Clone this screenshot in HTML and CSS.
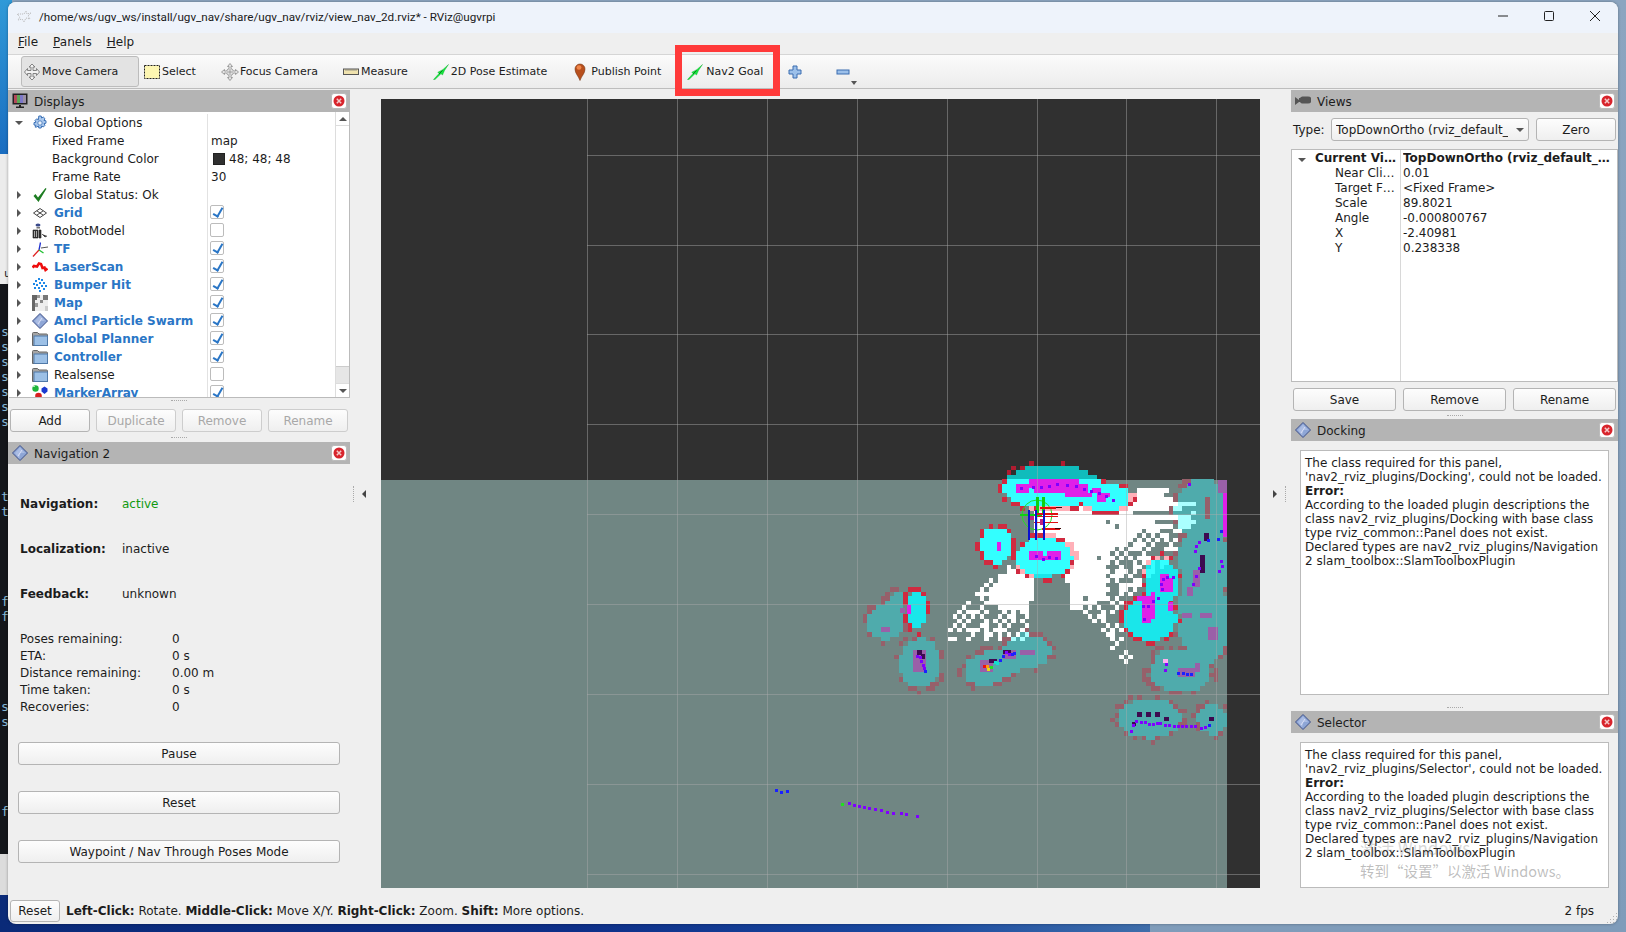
FILE: index.html
```html
<!DOCTYPE html>
<html lang="en">
<head>
<meta charset="utf-8">
<title>RViz</title>
<link rel="stylesheet" href="styles.css">
</head>
<body>
<svg class="defs" width="0" height="0" aria-hidden="true">
  <symbol id="i-app" viewBox="0 0 16 16"><path d="M1 4l3 3-2 3 4-1 2 3 2-4 4 1-2-3 3-3-4 1-1-3-2 3z" fill="none" stroke="#b5b5b5" stroke-dasharray="1 1"/></symbol>
  <symbol id="i-move" viewBox="0 0 18 18"><path d="M9 1l3 3h-2v3.500h3.500v-2l3 3.500-3 3.500v-2H10V14h2l-3 3-3-3h2v-3.500H4.500v2L1.500 9l3-3.500v2H8V4H6z" fill="#f2f2f2" stroke="#777" stroke-width=".9"/></symbol>
  <symbol id="i-select" viewBox="0 0 16 16"><rect x=".5" y="1.500" width="15" height="13" fill="#fdf6b2" stroke="#222" stroke-dasharray="2 1"/></symbol>
  <symbol id="i-focus" viewBox="0 0 18 18"><path d="M9 .5l2.500 3H10v2.100A3.500 3.500 0 0 1 12.400 8h2.100V6.500l3 2.500-3 2.500V10h-2.100A3.500 3.500 0 0 1 10 12.400v2.100h1.500L9 17.500l-2.500-3H8v-2.100A3.500 3.500 0 0 1 5.600 10H3.500v1.500L.5 9l3-2.500V8h2.100A3.500 3.500 0 0 1 8 5.600V3.500H6.500z" fill="#e4e4e4" stroke="#8a8a8a" stroke-width=".8"/><path d="M9 6v6M6 9h6" stroke="#8a8a8a" stroke-width=".7"/></symbol>
  <symbol id="i-ruler" viewBox="0 0 16 16"><rect x=".5" y="5" width="15" height="5.500" fill="#efe2ae" stroke="#555"/><path d="M3 5v2M5 5v2M7 5v2M9 5v2M11 5v2M13 5v2" stroke="#777" stroke-width=".7"/></symbol>
  <symbol id="i-arrow" viewBox="0 0 16 16"><path d="M.5 15.500L6 9.500 4.800 8.300 10 5.500 15.500 .5 11.500 6.500 9.500 11 8 9.700 2 15.500z" fill="#14e83c" stroke="#0aa52a" stroke-width=".4"/><path d="M6 10l3.500-3.500" stroke="#0b7a20" stroke-width="1"/></symbol>
  <symbol id="i-pin" viewBox="0 0 12 18"><path d="M6 17.500C4.500 13 1 10.500 1 6a5 5 0 0 1 10 0c0 4.500-3.500 7-5 11.500z" fill="#b8501e" stroke="#7a3a1a" stroke-width=".6"/><ellipse cx="5" cy="4.500" rx="2.400" ry="2.200" fill="#f0864a"/></symbol>
  <symbol id="i-plus" viewBox="0 0 14 14"><path d="M5 1h4v4h4v4H9v4H5V9H1V5h4z" fill="#9cc0ea" stroke="#3a6cb0" stroke-width="1"/></symbol>
  <symbol id="i-minus" viewBox="0 0 14 14"><rect x="1" y="5" width="12" height="4" fill="#9cc0ea" stroke="#3a6cb0"/></symbol>
  <symbol id="i-monitor" viewBox="0 0 16 16"><rect x=".5" y=".5" width="15" height="11" fill="#222"/><rect x="2" y="2" width="3" height="8" fill="#b24a5a"/><rect x="5" y="2" width="3" height="8" fill="#5aa855"/><rect x="8" y="2" width="3" height="8" fill="#7c78c8"/><rect x="11" y="2" width="3" height="8" fill="#9a8fa5"/><path d="M7 12h2v1.500h3V15H4v-1.500h3z" fill="#222"/></symbol>
  <symbol id="i-close" viewBox="0 0 16 16"><rect x=".5" y=".5" width="15" height="15" rx="2.500" fill="#fff" stroke="#bbb"/><circle cx="8" cy="8" r="5.500" fill="#d8242c"/><path d="M5.800 5.800l4.400 4.400m0-4.400l-4.400 4.400" stroke="#f5c8c8" stroke-width="1.500"/></symbol>
  <symbol id="i-gear" viewBox="0 0 16 16"><path d="M6.800 1h2.400l.4 2 1.700-1 1.700 1.700-1 1.700 2 .4v2.400l-2 .4 1 1.700-1.700 1.700-1.700-1-.4 2H6.800l-.4-2-1.700 1L3 12.100l1-1.700-2-.4V7.600l2-.4-1-1.700L4.700 3.800l1.700 1z" fill="#a9c7ec" stroke="#3f74b8"/><circle cx="8" cy="8" r="2.200" fill="#eaf2fb" stroke="#3f74b8" stroke-width=".8"/></symbol>
  <symbol id="i-check" viewBox="0 0 16 16"><path d="M1.500 9l2-2 2.500 3.500L13.500 1l1 .8L6.500 15z" fill="#1e7d22"/></symbol>
  <symbol id="i-grid" viewBox="0 0 16 16"><path d="M8 3.500l6.500 4.500L8 12.500 1.500 8zM4.800 5.800l6.400 4.400M11.200 5.800l-6.400 4.400" fill="none" stroke="#444" stroke-width="1"/></symbol>
  <symbol id="i-robot" viewBox="0 0 16 16"><ellipse cx="6" cy="2" rx="2.500" ry="1.500" fill="#3a4a8a"/><rect x="4.500" y="4" width="3.500" height="1.500" fill="#777"/><path d="M1 7h5v8H1zM7 7h2v8H7zM10 11l3 3 2-1" fill="#333" stroke="#222" stroke-width=".6"/><path d="M2.500 8v6M4.500 8v6" stroke="#ddd" stroke-width=".7"/></symbol>
  <symbol id="i-tf" viewBox="0 0 16 16"><path d="M7 9L8.500 1.500" stroke="#2030d0" stroke-width="1.300" fill="none"/><path d="M7 9L1 15.500" stroke="#e02020" stroke-width="1.300" fill="none"/><path d="M7 9l4.500 3" stroke="#20c030" stroke-width="1.300" fill="none"/><path d="M9 7l7-1" stroke="#555" stroke-width="1"/></symbol>
  <symbol id="i-laser" viewBox="0 0 16 16"><path d="M.5 8.500L2 7l3 .5L7 4.500 9 5l1.500 4 2-.5 1 2.500 2-1.500" fill="none" stroke="#ee0d0d" stroke-width="2.600"/></symbol>
  <symbol id="i-bumper" viewBox="0 0 16 16"><g fill="#1e88e8"><rect x="6" y="1" width="2" height="2"/><rect x="9" y="2" width="2" height="2"/><rect x="3" y="3" width="2" height="2"/><rect x="11" y="5" width="2" height="2"/><rect x="7" y="5" width="2" height="2"/><rect x="1" y="6" width="2" height="2"/><rect x="4" y="7" width="2" height="2"/><rect x="9" y="8" width="2" height="2"/><rect x="13" y="8" width="2" height="2"/><rect x="6" y="10" width="2" height="2"/><rect x="2" y="10" width="2" height="2"/><rect x="11" y="11" width="2" height="2"/><rect x="7" y="13" width="2" height="2"/></g></symbol>
  <symbol id="i-map" viewBox="0 0 16 16"><rect width="16" height="16" fill="#eee"/><g fill="#666"><rect width="5" height="5"/><rect x="5" width="3" height="3" fill="#999"/><rect x="11" width="5" height="5" fill="#777"/><rect y="5" width="3" height="11"/><rect x="3" y="8" width="3" height="4" fill="#999"/><rect x="8" y="5" width="3" height="3" fill="#888"/><rect x="13" y="11" width="3" height="5" fill="#ccc"/></g></symbol>
  <symbol id="i-diamond" viewBox="0 0 16 16"><path d="M8 .5L15.500 8 8 15.500 .5 8z" fill="#8ea6d6" stroke="#3c4f86"/><path d="M8 2.500L13 8H8.500L7 13.500 3 8z" fill="#b6c6e8" opacity=".7"/><path d="M6 11l4-6" stroke="#eef" stroke-width=".7"/></symbol>
  <symbol id="i-folder" viewBox="0 0 16 16"><path d="M.5 2.500a1 1 0 0 1 1-1h4L7 3h7.500a1 1 0 0 1 1 1v10.500H.5z" fill="#a5a5a5" stroke="#666"/><rect x="2" y="5" width="13.500" height="9.500" fill="#9cc0e6" stroke="#4f79a8"/></symbol>
  <symbol id="i-markers" viewBox="0 0 16 16"><circle cx="3.500" cy="3.500" r="3.200" fill="#1fb53a"/><rect x="1" y="1" width="2" height="1" fill="#a5e8ae"/><path d="M12.500 1.500l3 2v3l-3 2.500-3-2.500v-3z" fill="#1a3ad0"/><circle cx="6.500" cy="11" r="3.300" fill="#d81f1f"/></symbol>
  <symbol id="i-camera" viewBox="0 0 16 16"><path d="M0 4l4 3V5h1a3 3 0 0 1 3-1.500h5a3 3 0 0 1 0 7H8A3 3 0 0 1 5 9H4V9l-4 3z" fill="#555"/></symbol>
</svg>

<div class="desktop">
  <div class="bg-pale"><span class="bg-char">u</span></div>
  <pre class="terminal">


s
s
s
s
s
s
s




t
t





f
f





s
s





f</pre>
  <div class="bg-gray"></div>
  <div class="bg-navy"></div>
</div>

<main class="window">
  <header class="titlebar">
    <svg class="app-icon"><use href="#i-app"/></svg>
    <span class="title-text">/home/ws/ugv_ws/install/ugv_nav/share/ugv_nav/rviz/view_nav_2d.rviz* - RViz@ugvrpi</span>
    <div class="controls">
      <svg class="ctl" viewBox="0 0 12 12"><path d="M1 6h10" stroke="#222" fill="none"/></svg>
      <svg class="ctl" viewBox="0 0 12 12"><rect x="1.500" y="1.500" width="9" height="9" rx="1" fill="none" stroke="#222"/></svg>
      <svg class="ctl" viewBox="0 0 12 12"><path d="M1 1l10 10M11 1L1 11" stroke="#222" fill="none"/></svg>
    </div>
  </header>

  <nav class="menubar">
    <span><u>F</u>ile</span><span><u>P</u>anels</span><span><u>H</u>elp</span>
  </nav>

  <div class="toolbar">
    <span class="grab"></span>
    <button class="tool tool-move"><svg class="ti ti-lg"><use href="#i-move"/></svg>Move Camera</button>
    <button class="tool tool-select"><svg class="ti"><use href="#i-select"/></svg>Select</button>
    <button class="tool tool-focus"><svg class="ti ti-lg"><use href="#i-focus"/></svg>Focus Camera</button>
    <button class="tool tool-measure"><svg class="ti"><use href="#i-ruler"/></svg>Measure</button>
    <button class="tool tool-pose"><svg class="ti"><use href="#i-arrow"/></svg>2D Pose Estimate</button>
    <button class="tool tool-point"><svg class="ti ti-pin"><use href="#i-pin"/></svg>Publish Point</button>
    <button class="tool tool-goal"><svg class="ti ti-goal"><use href="#i-arrow"/></svg>Nav2 Goal</button>
    <button class="tool tool-plus"><svg class="ti ti-sm"><use href="#i-plus"/></svg></button>
    <button class="tool tool-minus"><svg class="ti ti-sm"><use href="#i-minus"/></svg></button>
    <span class="more"></span>
  </div>
  <div class="highlight"></div>

  <div class="main">
    <aside class="left">
      <div class="dock-title"><svg class="dt-icon"><use href="#i-monitor"/></svg><span>Displays</span><svg class="dt-close"><use href="#i-close"/></svg></div>
      <div class="tree">
        <div class="tree-list">
          <div class="row"><i class="exp open"></i><svg class="ri"><use href="#i-gear"/></svg><span class="rn">Global Options</span><span class="rv"></span></div>
          <div class="row"><span class="rn sub">Fixed Frame</span><span class="rv">map</span></div>
          <div class="row"><span class="rn sub">Background Color</span><span class="rv"><i class="swatch"></i>48; 48; 48</span></div>
          <div class="row"><span class="rn sub">Frame Rate</span><span class="rv">30</span></div>
          <div class="row"><i class="exp"></i><svg class="ri"><use href="#i-check"/></svg><span class="rn">Global Status: Ok</span><span class="rv"></span></div>
          <div class="row"><i class="exp"></i><svg class="ri"><use href="#i-grid"/></svg><span class="rn on">Grid</span><span class="rv"><i class="cb checked"></i></span></div>
          <div class="row"><i class="exp"></i><svg class="ri"><use href="#i-robot"/></svg><span class="rn">RobotModel</span><span class="rv"><i class="cb"></i></span></div>
          <div class="row"><i class="exp"></i><svg class="ri"><use href="#i-tf"/></svg><span class="rn on">TF</span><span class="rv"><i class="cb checked"></i></span></div>
          <div class="row"><i class="exp"></i><svg class="ri"><use href="#i-laser"/></svg><span class="rn on">LaserScan</span><span class="rv"><i class="cb checked"></i></span></div>
          <div class="row"><i class="exp"></i><svg class="ri"><use href="#i-bumper"/></svg><span class="rn on">Bumper Hit</span><span class="rv"><i class="cb checked"></i></span></div>
          <div class="row"><i class="exp"></i><svg class="ri"><use href="#i-map"/></svg><span class="rn on">Map</span><span class="rv"><i class="cb checked"></i></span></div>
          <div class="row"><i class="exp"></i><svg class="ri"><use href="#i-diamond"/></svg><span class="rn on">Amcl Particle Swarm</span><span class="rv"><i class="cb checked"></i></span></div>
          <div class="row"><i class="exp"></i><svg class="ri"><use href="#i-folder"/></svg><span class="rn on">Global Planner</span><span class="rv"><i class="cb checked"></i></span></div>
          <div class="row"><i class="exp"></i><svg class="ri"><use href="#i-folder"/></svg><span class="rn on">Controller</span><span class="rv"><i class="cb checked"></i></span></div>
          <div class="row"><i class="exp"></i><svg class="ri"><use href="#i-folder"/></svg><span class="rn">Realsense</span><span class="rv"><i class="cb"></i></span></div>
          <div class="row"><i class="exp"></i><svg class="ri"><use href="#i-markers"/></svg><span class="rn on">MarkerArray</span><span class="rv"><i class="cb checked"></i></span></div>
        </div>
        <div class="scrollbar">
          <span class="sb-btn"><i class="tri-up"></i></span>
          <span class="sb-thumb"></span>
          <span class="sb-track"></span>
          <span class="sb-btn"><i class="tri-down"></i></span>
        </div>
      </div>
      <div class="handle h-a"></div>
      <div class="btn-row btn-row-left">
        <button class="btn">Add</button>
        <button class="btn off">Duplicate</button>
        <button class="btn off">Remove</button>
        <button class="btn off">Rename</button>
      </div>
      <div class="handle h-b"></div>
      <div class="dock-title"><svg class="dt-icon"><use href="#i-diamond"/></svg><span>Navigation 2</span><svg class="dt-close"><use href="#i-close"/></svg></div>
      <section class="nav-panel">
        <div class="nav-state"><b>Navigation:</b><span class="green">active</span></div>
        <div class="nav-state"><b>Localization:</b><span>inactive</span></div>
        <div class="nav-state"><b>Feedback:</b><span>unknown</span></div>
        <div class="nav-stats">
          <div class="stat"><span>Poses remaining:</span><span>0</span></div>
          <div class="stat"><span>ETA:</span><span>0 s</span></div>
          <div class="stat"><span>Distance remaining:</span><span>0.00 m</span></div>
          <div class="stat"><span>Time taken:</span><span>0 s</span></div>
          <div class="stat"><span>Recoveries:</span><span>0</span></div>
        </div>
        <button class="btn wide">Pause</button>
        <button class="btn wide">Reset</button>
        <button class="btn wide">Waypoint / Nav Through Poses Mode</button>
      </section>
    </aside>

    <div class="splitter"><i class="dots"></i><i class="tri-left"></i></div>

    <div class="viewport"><canvas id="map" width="879" height="789"></canvas></div>

    <div class="splitter splitter-r"><i class="tri-right"></i><i class="dots"></i></div>

    <aside class="right">
      <div class="dock-title"><svg class="dt-icon"><use href="#i-camera"/></svg><span>Views</span><svg class="dt-close"><use href="#i-close"/></svg></div>
      <div class="type-row">
        <span class="type-label">Type:</span>
        <div class="combo"><span class="combo-text">TopDownOrtho (rviz_default_</span><i class="tri-down"></i></div>
        <button class="btn zero">Zero</button>
      </div>
      <div class="views-tree">
        <div class="vrow bold"><i class="exp open"></i><span class="vn">Current Vi…</span><span class="vv">TopDownOrtho (rviz_default_…</span></div>
        <div class="vrow"><span class="vn sub">Near Cli…</span><span class="vv">0.01</span></div>
        <div class="vrow"><span class="vn sub">Target F…</span><span class="vv">&lt;Fixed Frame&gt;</span></div>
        <div class="vrow"><span class="vn sub">Scale</span><span class="vv">89.8021</span></div>
        <div class="vrow"><span class="vn sub">Angle</span><span class="vv">-0.000800767</span></div>
        <div class="vrow"><span class="vn sub">X</span><span class="vv">-2.40981</span></div>
        <div class="vrow"><span class="vn sub">Y</span><span class="vv">0.238338</span></div>
      </div>
      <div class="btn-row btn-row-right">
        <button class="btn">Save</button>
        <button class="btn">Remove</button>
        <button class="btn">Rename</button>
      </div>
      <div class="handle h-c"></div>
      <div class="dock-title"><svg class="dt-icon"><use href="#i-diamond"/></svg><span>Docking</span><svg class="dt-close"><use href="#i-close"/></svg></div>
      <div class="msg msg-docking">The class required for this panel,<br>'nav2_rviz_plugins/Docking', could not be loaded.<br><b>Error:</b><br>According to the loaded plugin descriptions the<br>class nav2_rviz_plugins/Docking with base class<br>type rviz_common::Panel does not exist.<br>Declared types are nav2_rviz_plugins/Navigation<br>2 slam_toolbox::SlamToolboxPlugin</div>
      <div class="handle h-d"></div>
      <div class="dock-title"><svg class="dt-icon"><use href="#i-diamond"/></svg><span>Selector</span><svg class="dt-close"><use href="#i-close"/></svg></div>
      <div class="msg msg-selector">The class required for this panel,<br>'nav2_rviz_plugins/Selector', could not be loaded.<br><b>Error:</b><br>According to the loaded plugin descriptions the<br>class nav2_rviz_plugins/Selector with base class<br>type rviz_common::Panel does not exist.<br>Declared types are nav2_rviz_plugins/Navigation<br>2 slam_toolbox::SlamToolboxPlugin</div>
    </aside>
  </div>

  <footer class="status">
    <button class="btn status-reset">Reset</button>
    <span class="status-text"><b>Left-Click:</b> Rotate. <b>Middle-Click:</b> Move X/Y. <b>Right-Click:</b> Zoom. <b>Shift:</b> More options.</span>
    <span class="fps">2 fps</span>
    <span class="grip"></span>
  </footer>
</main>

<div class="watermark">
  <div class="wm-1">激活 Windows</div>
  <div class="wm-2">转到“设置”以激活 Windows。</div>
</div>
<script src="map.js"></script>
</body>
</html>
```
FILE: styles.css
```css
* { box-sizing: border-box; }
html, body { margin: 0; height: 100%; overflow: hidden; }
body {
  width: 1626px; height: 932px; position: relative;
  background: linear-gradient(180deg, #8ca5c0 0%, #7f9cba 100%);
  font: 12px/1 "DejaVu Sans", sans-serif; color: #1c1c1c;
}
.defs { position: absolute; }
u { text-decoration: underline; }

/* desktop behind the window */
.desktop { position: absolute; inset: 0; }
.desktop::before {
  content: ""; position: absolute; left: 0; top: 0; width: 12px; height: 154px;
  background: linear-gradient(160deg, #2f9ad8, #1a6cc0);
}
.bg-pale { position: absolute; left: 0; top: 154px; width: 12px; height: 130px; background: #ececec; }
.bg-char { position: absolute; left: 4px; top: 113px; font: 11px "DejaVu Sans Mono", monospace; color: #222; }
.terminal {
  position: absolute; left: 0; top: 284px; width: 12px; height: 570px; margin: 0;
  padding: 10px 0 0 1px; background: #14161a; color: #88b8d4;
  font: 13px/15px "DejaVu Sans Mono", monospace; overflow: hidden;
}
.bg-gray { position: absolute; left: 0; top: 854px; width: 12px; height: 41px; background: #dcdcdc; }
.bg-navy {
  position: absolute; left: 0; top: 895px; width: 1150px; height: 37px;
  background: linear-gradient(90deg, #0a2a78 0%, #0d2f88 50%, #1a4aa0 80%, #3f6eaa 100%);
}

/* window */
.window {
  position: absolute; left: 8px; top: 2px; width: 1610px; height: 922px;
  background: #efefef; border-radius: 8px; overflow: hidden;
  display: flex; flex-direction: column;
  box-shadow: 0 0 3px rgba(0,0,0,.35);
}
.titlebar {
  height: 31px; background: #eef3fb; display: flex; align-items: center;
  padding-left: 8px; flex: none;
}
.app-icon { width: 16px; height: 16px; }
.title-text { margin-left: 7px; font: 11.7px Roboto, sans-serif; color: #1a1a1a; margin-top: -1px; }
.controls { margin-left: auto; display: flex; }
.ctl { width: 12px; height: 12px; margin-right: 34px; margin-top: -3px; }
.ctl:last-child { margin-right: 17px; }

.menubar {
  height: 21px; flex: none; display: flex; align-items: center; gap: 15px; padding: 0 0 4px 10px;
  background: #efefef;
}
.toolbar {
  height: 35px; flex: none; display: flex; align-items: center;
  background: linear-gradient(180deg, #fbfbfb, #ececec);
  border-top: 1px solid #d5d5d5; border-bottom: 1px solid #bdbdbd;
  padding-left: 5px;
}
.grab { width: 4px; height: 16px; background: radial-gradient(circle, #aaa 40%, transparent 45%) 0 0/2px 2px; }
.tool {
  height: 31px; display: flex; align-items: center; border: 1px solid transparent;
  background: none; padding: 0; font: 11px "DejaVu Sans", sans-serif; color: #1c1c1c;
  white-space: nowrap; flex: none;
}
.ti { width: 16px; height: 16px; margin-right: 2px; flex: none; }
.ti-lg { width: 18px; height: 18px; margin-right: 1px; }
.ti-pin { width: 12px; height: 18px; margin-right: 5px; }
.ti-goal { margin-right: 3px; }
.ti-sm { width: 14px; height: 14px; margin: 0; }
.tool-move { margin-left: 4px; width: 118px; padding-left: 1px; background: #e3e3e3; border-color: #bcbcbc; border-radius: 3px; }
.tool-select { margin-left: 4px; }
.tool-focus { margin-left: 23px; }
.tool-measure { margin-left: 23px; }
.tool-pose { margin-left: 23px; }
.tool-point { margin-left: 25px; }
.tool-goal { margin-left: 24px; }
.tool-plus { margin-left: 23px; }
.tool-minus { margin-left: 32px; }
.more { width: 0; height: 0; margin: 22px 0 0 0; border: 3px solid transparent; border-top: 4px solid #555; border-bottom: 0; }
.highlight {
  position: absolute; left: 667px; top: 43px; width: 105px; height: 51px;
  border: 7px solid #ff3a3a;
}

.main { flex: 1; display: flex; min-height: 0; }

.dock-title {
  height: 22px; flex: none; background: #b4b4b4; display: flex; align-items: center;
  padding: 0 3px 0 4px;
}
.dt-icon { width: 16px; height: 16px; flex: none; }
.dt-close { width: 16px; height: 16px; margin-left: auto; margin-top: -1px; flex: none; }
.dock-title span { margin: 2px 0 0 6px; font-size: 12px; color: #1c1c1c; }

/* left dock */
.left { width: 342px; flex: none; padding-top: 1px; display: flex; flex-direction: column; }
.tree { height: 286px; flex: none; margin-left: 1px; display: flex; background: #fff; border-right: 1px solid #bbb; border-bottom: 1px solid #bbb; overflow: hidden; }
.tree-list { flex: 1; overflow: hidden; padding-top: 2px; }
.row { height: 18px; display: flex; align-items: center; position: relative; flex: none; }
.exp { position: absolute; left: 8px; top: 5px; width: 0; height: 0; border: 4px solid transparent; border-left: 4px solid #555; border-right: 0; }
.exp.open { left: 6px; top: 7px; border: 4px solid transparent; border-top: 4px solid #555; border-bottom: 0; }
.ri { position: absolute; left: 23px; top: 1px; width: 16px; height: 16px; }
.rn { margin-left: 45px; width: 153px; flex: none; white-space: nowrap; }
.rn.sub { margin-left: 43px; width: 155px; }
.rn.on { color: #2a76c6; font-weight: bold; }
.rv { height: 18px; flex: 1; border-left: 1px solid #e2e2e2; padding-left: 3px; display: flex; align-items: center; white-space: nowrap; }
.swatch { width: 12px; height: 12px; background: #303030; border: 1px solid #222; margin: 0 4px 0 2px; }
.cb { width: 14px; height: 14px; border: 1px solid #bcbcbc; border-radius: 2px; background: #fff; margin: -2px 0 0 -1px; position: relative; }
.cb.checked::after {
  content: ""; position: absolute; left: 4px; top: 0; width: 4px; height: 9px;
  border: solid #2a76c6; border-width: 0 2px 2px 0; transform: rotate(30deg);
}
.scrollbar { width: 14px; flex: none; display: flex; flex-direction: column; border-left: 1px solid #ddd; background: #fff; }
.sb-btn { height: 14px; flex: none; display: flex; align-items: center; justify-content: center; border-bottom: 1px solid #ddd; }
.sb-btn:last-child { border-top: 1px solid #ddd; border-bottom: 0; }
.sb-thumb { flex: 1; }
.sb-track { height: 17px; background: #e6e6e6; border-top: 1px solid #ccc; }
.tri-up { width: 0; height: 0; border: 4px solid transparent; border-bottom: 4px solid #555; border-top: 0; }
.tri-down { width: 0; height: 0; border: 4px solid transparent; border-top: 4px solid #555; border-bottom: 0; }
.handle { width: 16px; height: 1px; flex: none; border-top: 1px dotted #aaa; align-self: center; }
.h-a { margin-top: 2px; }
.h-b { margin-top: 5px; margin-bottom: 4px; }
.h-c { margin-top: 4px; margin-bottom: 3px; }
.h-d { margin-top: 12px; margin-bottom: 3px; }

.btn {
  height: 23px; border: 1px solid #b4b4b4; border-radius: 3px; padding: 0;
  background: linear-gradient(180deg, #fdfdfd, #efefef);
  font: 12px "DejaVu Sans", sans-serif; color: #1c1c1c;
}
.btn.off { color: #a8a8a8; border-color: #cdcdcd; }
.btn-row { display: flex; flex: none; }
.btn-row-left { margin: 8px 0 0 2px; gap: 6px; }
.btn-row-left .btn { width: 80px; }

.nav-panel { flex: 1; padding: 17px 10px 0 12px; display: flex; flex-direction: column; }
.nav-state { height: 45px; flex: none; display: flex; align-items: center; }
.nav-state b { width: 102px; flex: none; }
.green { color: #119911; }
.nav-stats { margin: 14px 0 27px; flex: none; }
.stat { height: 17px; display: flex; align-items: center; }
.stat span:first-child { width: 152px; flex: none; }
.wide { width: 322px; flex: none; margin-bottom: 26px; margin-left: -2px; }

/* splitters */
.splitter { width: 31px; flex: none; display: flex; align-items: center; padding-left: 3px; gap: 8px; }
.splitter-r { padding-left: 13px; gap: 8px; }
.dots { width: 1px; height: 16px; border-left: 1px dotted #aaa; }
.tri-left { width: 0; height: 0; border: 4px solid transparent; border-right: 4px solid #444; border-left: 0; }
.tri-right { width: 0; height: 0; border: 4px solid transparent; border-left: 4px solid #444; border-right: 0; }

.viewport { width: 879px; height: 789px; margin-top: 10px; flex: none; background: #303030; }
#map { display: block; }

/* right dock */
.right { width: 327px; flex: none; padding-top: 1px; display: flex; flex-direction: column; }
.type-row { height: 23px; margin-top: 6px; flex: none; display: flex; align-items: center; padding-left: 2px; }
.type-label { width: 38px; flex: none; }
.combo {
  width: 198px; height: 23px; flex: none; border: 1px solid #b4b4b4; border-radius: 3px; background: linear-gradient(180deg, #fdfdfd, #efefef);
  display: flex; align-items: center; padding: 0 6px 0 4px; overflow: hidden; white-space: nowrap;
}
.combo-text { width: 172px; overflow: hidden; flex: none; line-height: 16px; }
.combo .tri-down { margin-left: 8px; flex: none; }
.zero { width: 80px; margin-left: 7px; flex: none; }
.views-tree { height: 233px; margin-top: 8px; flex: none; border: 1px solid #bbb; background: #fff; position: relative; padding-top: 1px; }
.views-tree::after { content: ""; position: absolute; left: 108px; top: 0; bottom: 0; width: 1px; background: #d8d8d8; }
.vrow { height: 15px; display: flex; align-items: center; position: relative; white-space: nowrap; }
.vrow.bold { font-weight: bold; }
.vn { width: 111px; flex: none; padding-left: 23px; overflow: hidden; line-height: 15px; }
.vn.sub { padding-left: 43px; }
.vv { flex: 1; overflow: hidden; line-height: 15px; }
.btn-row-right { margin: 6px 0 0 2px; gap: 7px; }
.btn-row-right .btn { width: 103px; }
.msg { margin: 9px 0 0 9px; width: 309px; flex: none; background: #fff; border: 1px solid #bbb; padding: 5px 4px; line-height: 14px; white-space: nowrap; }
.msg-docking { height: 245px; }
.msg-selector { height: 146px; }

/* status */
.status { height: 25px; flex: none; display: flex; align-items: center; position: relative; padding: 0 24px 2px 2px; }
.status-reset { width: 50px; height: 22px; }
.status-text { margin-left: 6px; }
.fps { margin-left: auto; }
.grip {
  position: absolute; right: 1px; bottom: 1px; width: 11px; height: 11px;
  background: radial-gradient(circle, #b0b0b0 35%, transparent 40%) 0 0/3px 3px;
  clip-path: polygon(100% 0, 100% 100%, 0 100%);
}

.watermark {
  position: absolute; left: 1360px; top: 839px; color: rgba(110,110,110,.45);
  font-family: "Noto Sans CJK SC", sans-serif; pointer-events: none;
}
.wm-1 { font-size: 17px; margin-bottom: 8px; opacity: .6; }
.wm-2 { font-size: 14.500px; }
```
FILE: map.js
```js
(function () {
  var cv = document.getElementById('map'), g = cv.getContext('2d');
  var OX = 381, OY = 99, C = 4.5, RIGHT = 1227, TOP = 461;

  function rect(col, x, y, w, h) {
    g.fillStyle = col;
    var a = Math.round(x - OX), b = Math.round(y - OY);
    g.fillRect(a, b, Math.round(x + w - OX) - a, Math.round(y + h - OY) - b);
  }
  function hash(a, b, s) {
    var v = Math.sin(a * 12.9898 + b * 78.233 + (s || 0) * 37.719) * 43758.5453;
    return v - Math.floor(v);
  }
  function inPoly(p, x, y) {
    var hit = false;
    for (var i = 0, j = p.length - 1; i < p.length; j = i++) {
      if ((p[i][1] > y) !== (p[j][1] > y) &&
          x < (p[j][0] - p[i][0]) * (y - p[i][1]) / (p[j][1] - p[i][1]) + p[i][0]) hit = !hit;
    }
    return hit;
  }
  function ell(list, x, y) {
    var best = 9;
    list.forEach(function (e) {
      var dx = (x - e[0]) / e[2], dy = (y - e[1]) / e[3];
      var d = Math.sqrt(dx * dx + dy * dy);
      var px = (d - 1) * Math.min(e[2], e[3]);
      if (px < best) best = px;
    });
    return best;
  }

  var BRIGHT = [
    [1052, 486, 48, 22], [1105, 497, 24, 14], [1032, 488, 28, 18],
    [996, 545, 16, 18], [1044, 557, 28, 20],
    [1161, 582, 17, 24], [1150, 618, 26, 22], [916, 609, 10, 19]
  ];
  var TEAL = [
    [1202, 510, 27, 32], [1203, 565, 26, 40], [1202, 615, 27, 38], [1205, 640, 20, 24],
    [885, 622, 19, 17], [900, 608, 16, 16],
    [920, 663, 21, 25],
    [1026, 651, 24, 17], [1000, 662, 24, 14], [984, 670, 20, 16],
    [1180, 672, 31, 20], [1168, 660, 14, 12],
    [1150, 718, 31, 20], [1212, 719, 15, 15]
  ];
  var SOLID = [
    [[1030, 505], [1127, 488], [1135, 535], [1110, 552], [1105, 600], [1072, 612], [1066, 575], [1040, 548], [1035, 530]],
    [[988, 590], [1036, 550], [1030, 612], [990, 606]]
  ];
  var MESH = [
    [[1100, 530], [1190, 525], [1170, 560], [1140, 590], [1118, 615], [1098, 605]],
    [[1032, 545], [1030, 640], [948, 640], [952, 612], [985, 585]],
    [[1075, 600], [1110, 600], [1135, 665], [1122, 665], [1090, 620]]
  ];
  var STRIPES = [
    [1137, 1170, 488], [1127, 1165, 492.5], [1127, 1175, 497], [1127, 1195, 501.5],
    [1130, 1180, 506], [1190, 1196, 510.5], [1127, 1190, 515], [1127, 1155, 519.5],
    [1177, 1195, 519.5], [1127, 1170, 524], [1185, 1193, 524], [1127, 1142, 528.5], [1150, 1160, 528.5]
  ];
  var MAGENTA = [
    [[1014, 482], [1072, 479], [1092, 487], [1116, 498], [1112, 503], [1082, 496], [1040, 493], [1014, 492]],
    [[1030, 552], [1060, 552], [1062, 562], [1030, 562]],
    [[1139, 595], [1155, 592], [1155, 620], [1141, 622]],
    [[1158, 572], [1174, 572], [1174, 590], [1160, 590]]
  ];

  g.fillStyle = '#303030'; g.fillRect(0, 0, 879, 789);
  rect('#708683', 381, 480, RIGHT - 381, 408);

  // occupancy grid and costmap, cell by cell
  for (var r = 0; r < 66; r++) {
    for (var c = 0; c < 84; c++) {
      var x = RIGHT - C * (c + 1), y = TOP + C * r, cx = x + C / 2, cy = y + C / 2;
      var free = false, i;
      if (cy >= 480) {
        for (i = 0; i < SOLID.length; i++) if (inPoly(SOLID[i], cx, cy) && hash(c, r, 1) < 0.98) free = true;
        for (i = 0; i < MESH.length; i++) if (inPoly(MESH[i], cx, cy) && hash(c, r, 2) < ((c + r) % 2 === 0 ? 0.75 : 0.2)) free = true;
        STRIPES.forEach(function (s) { if (cx > s[0] && cx < s[1] && Math.abs(cy - s[2] - 2) < 2.3) free = true; });
      }
      var b = ell(BRIGHT, cx, cy), t = ell(TEAL, cx, cy), col = null;
      if (b <= 0) {
        col = cy < 480 ? '#10bcbc' : ((free || (cy < 575 && cx < 1135)) ? '#33ffff' : '#1ae6ea');
      } else if (b <= C * 0.8) {
        if (hash(c, r, 3) < 0.5) col = cy < 480 ? '#b01c30' : '#d02a40';
        else if (cy >= 480) col = free ? '#ffb0b8' : null;
      } else if (t <= 0 && cy >= 480) {
        col = free ? '#aaffff' : '#4fabac';
      } else if (t <= C && cy >= 480) {
        if (hash(c, r, 4) < 0.5) col = '#96606a';
      }
      if (col === null && free) col = '#ffffff';
      if (b <= 0 && cy >= 480) {
        for (i = 0; i < MAGENTA.length; i++) if (inPoly(MAGENTA[i], cx, cy) && hash(c, r, 5) < 0.92) col = '#e020e8';
      }
      if (col) rect(col, x, y, C, C);
    }
  }

  // solid patches on the costmap
  [
    [1187, 587, 6, 9, '#9a60a8'], [1193, 570, 7, 17, '#9a60a8'], [1200, 555, 5, 18, '#3d0a50'],
    [1204, 533, 5, 8, '#3d0a50'], [1205, 497, 5, 22, '#96606a'], [1218, 480, 9, 13, '#9a60a8'],
    [1200, 613, 12, 5, '#9a60a8'], [1208, 627, 10, 13, '#9a60a8'], [1182, 613, 10, 5, '#9a60a8'],
    [881, 627, 9, 4.5, '#9a60a8'], [900, 608, 5, 5, '#9a60a8'], [907, 605, 4, 9, '#e020e8'],
    [913, 650, 13, 22, '#9a60a8'], [917, 650, 5, 5, '#3d0a50'], [921, 654, 4, 5, '#3d0a50'],
    [980, 660, 13, 12, '#9a60a8'], [1003, 650, 13, 9, '#9a60a8'], [1020, 650, 15, 5, '#9a60a8'],
    [989, 659, 8, 4, '#3d0a50'], [1003, 650, 8, 4, '#3d0a50'],
    [1178, 668, 17, 9, '#9a60a8'], [1195, 663, 5, 9, '#9a60a8'], [1163, 659, 5, 4, '#ffb0f0'],
    [1137, 712, 5, 5, '#3d0a50'], [1146, 712, 5, 5, '#3d0a50'], [1155, 712, 5, 5, '#3d0a50'],
    [1164, 717, 5, 4, '#3d0a50'], [1209, 717, 5, 4, '#3d0a50'], [1132, 722, 4, 4, '#3d0a50'],
    [997, 542, 4, 9, '#e020e8'], [1223, 493, 4, 44, '#e020e8'], [1168, 602, 5, 9, '#e020e8']
  ].forEach(function (p) { rect(p[4], p[0], p[1], p[2], p[3]); });

  // grid
  g.fillStyle = 'rgba(170,170,170,.45)';
  [587, 677, 767, 857, 947, 1037, 1126, 1216].forEach(function (x) { g.fillRect(x - OX, 0, 1, 789); });
  [155, 245, 334, 424, 514, 604, 694, 784, 874].forEach(function (y) { g.fillRect(587 - OX, y - OY, 1260 - 587, 1); });

  // scan points
  function dots(col, pts, s) { pts.forEach(function (p) { rect(col, p[0], p[1], s || 3, s || 3); }); }
  dots('#7f00ff', [
    [1130, 730], [1132, 724], [1135, 720], [1140, 721], [1144, 721], [1148, 723], [1152, 723], [1156, 722], [1159, 722],
    [1164, 724], [1168, 724], [1173, 725], [1177, 725], [1181, 725], [1185, 725], [1190, 725], [1194, 725], [1200, 727], [1204, 726],
    [916, 655], [919, 656], [920, 660], [922, 664], [923, 667], [1165, 663], [1164, 669],
    [1172, 576], [1166, 576], [1162, 578], [1160, 583], [1161, 588], [1142, 605], [1147, 605], [1152, 600], [1157, 597], [1143, 618],
    [1194, 550], [1195, 545], [1198, 541], [1195, 575], [1198, 567], [1192, 583], [1220, 560], [1221, 565], [1218, 570], [1188, 483],
    [1020, 487], [1032, 486], [1040, 486], [1048, 485], [1056, 483], [1066, 484], [1075, 485], [1083, 488], [1090, 490], [1098, 492], [1105, 495], [1112, 499],
    [1035, 555], [1042, 558], [1048, 556], [1055, 557],
    [1005, 651], [1008, 653], [848, 802], [853, 804], [858, 805], [863, 806], [868, 807], [874, 808], [880, 809], [886, 811], [892, 812], [900, 812], [905, 813], [916, 815]
  ]);
  dots('#1a20ff', [
    [1208, 724], [924, 670], [1177, 672], [1182, 672], [1186, 673], [1190, 673], [1207, 539], [1217, 538], [1220, 530],
    [999, 659], [1002, 655], [1011, 653], [1013, 652], [775, 789], [780, 791], [786, 790]
  ]);
  dots('#ee1010', [[983, 665]]); dots('#ff9a10', [[986, 665]]); dots('#e8e010', [[987, 668]]);
  dots('#20e020', [[990, 666], [841, 803]]); dots('#10e0d0', [[994, 661], [996, 662]]);

  // robot
  g.strokeStyle = '#22e022'; g.lineWidth = 1;
  g.beginPath(); g.arc(1037 - OX, 515 - OY, 15, 0, Math.PI * 2); g.stroke();
  rect('#10d010', 1036, 497, 3, 20); rect('#10d010', 1042, 497, 3, 18); rect('#10d010', 1020, 514, 22, 2);
  rect('#e01010', 1040, 507, 16, 2); rect('#3a0808', 1056, 507, 6, 1);
  rect('#e01010', 1036, 513, 22, 2); rect('#e01010', 1038, 516, 20, 1);
  rect('#e01010', 1034, 522, 24, 1); rect('#e01010', 1042, 528, 18, 2); rect('#3a0808', 1055, 528, 6, 1);
  rect('#c02080', 1030, 516, 4, 4); rect('#c02080', 1040, 519, 3, 6);
  rect('#0a10d0', 1028, 510, 2, 30); rect('#0a10d0', 1035, 510, 2, 30); rect('#0a10d0', 1043, 510, 2, 30);
})();
```
